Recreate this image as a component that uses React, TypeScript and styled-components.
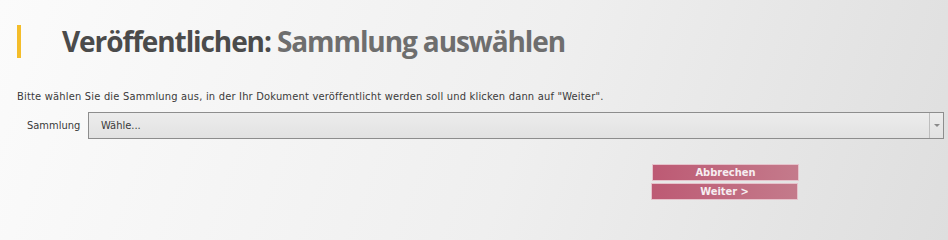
import React from "react";
import styled, { createGlobalStyle } from "styled-components";

const GlobalStyle = createGlobalStyle`
  html, body {
    margin: 0;
    padding: 0;
    height: 100%;
  }
  body {
    background: linear-gradient(110deg, #fbfbfb 0%, #efefef 55%, #dedede 100%);
    font-family: "DejaVu Sans Condensed", "Liberation Sans", sans-serif;
    color: #3c3c3c;
  }
`;

const Page = styled.div`
  width: 948px;
  height: 210px;
  box-sizing: border-box;
  padding: 25px 4px 0 17px;
  display: flex;
  flex-direction: column;
`;

const Header = styled.div`
  display: flex;
  align-items: center;
  gap: 41px;
  height: 33px;
`;

const Accent = styled.div`
  width: 4px;
  height: 33px;
  background: #f4bd2a;
`;

const Title = styled.h1`
  margin: 0;
  font-family: "Open Sans", "Noto Sans", sans-serif;
  font-weight: 700;
  font-size: 28px;
  letter-spacing: -1.1px;
  line-height: 33px;
  color: #4b4b4b;
`;

const TitleLight = styled.span`
  color: #6e6e6e;
`;

const Intro = styled.p`
  margin: 32px 0 0;
  font-size: 11px;
  letter-spacing: 0.2px;
  line-height: 14px;
  color: #3a3a3a;
`;

const Field = styled.div`
  display: flex;
  align-items: center;
  margin-top: 8px;
  padding-left: 10px;
`;

const Label = styled.label`
  width: 61px;
  font-size: 11px;
  color: #3a3a3a;
`;

const Select = styled.div`
  flex: 1;
  height: 27px;
  box-sizing: border-box;
  border: 1px solid #8d8d8d;
  background: linear-gradient(180deg, #ececec, #e2e2e2);
  display: flex;
  align-items: stretch;
`;

const SelectValue = styled.div`
  flex: 1;
  display: flex;
  align-items: center;
  padding-left: 12px;
  font-size: 11px;
  color: #3a3a3a;
`;

const SelectArrow = styled.div`
  width: 13px;
  border-left: 1px solid #bdbdbd;
  display: flex;
  align-items: center;
  justify-content: center;
  &::after {
    content: "";
    border-left: 3px solid transparent;
    border-right: 3px solid transparent;
    border-top: 3px solid #8a8a8a;
  }
`;

const Actions = styled.div`
  display: flex;
  flex-direction: column;
  gap: 2px;
  margin: 25px 0 0 634px;
  width: 147px;
`;

const Button = styled.button<{ $shift?: number }>`
  height: 17px;
  width: 147px;
  margin-left: ${(p) => p.$shift ?? 0}px;
  padding: 0;
  border: 1px solid #e6c3cc;
  background: linear-gradient(90deg, #bd5a74, #c47a8b);
  color: #f6eef1;
  font-family: "DejaVu Sans Condensed", "Liberation Sans", sans-serif;
  font-weight: 700;
  font-size: 11px;
  line-height: 15px;
  cursor: pointer;
`;

export default function App() {
  return (
    <>
      <GlobalStyle />
      <Page>
        <Header>
          <Accent />
          <Title>
            Veröffentlichen: <TitleLight>Sammlung auswählen</TitleLight>
          </Title>
        </Header>
        <Intro>
          Bitte wählen Sie die Sammlung aus, in der Ihr Dokument veröffentlicht
          werden soll und klicken dann auf "Weiter".
        </Intro>
        <Field>
          <Label>Sammlung</Label>
          <Select>
            <SelectValue>Wähle...</SelectValue>
            <SelectArrow />
          </Select>
        </Field>
        <Actions>
          <Button $shift={1}>Abbrechen</Button>
          <Button>Weiter &gt;</Button>
        </Actions>
      </Page>
    </>
  );
}
